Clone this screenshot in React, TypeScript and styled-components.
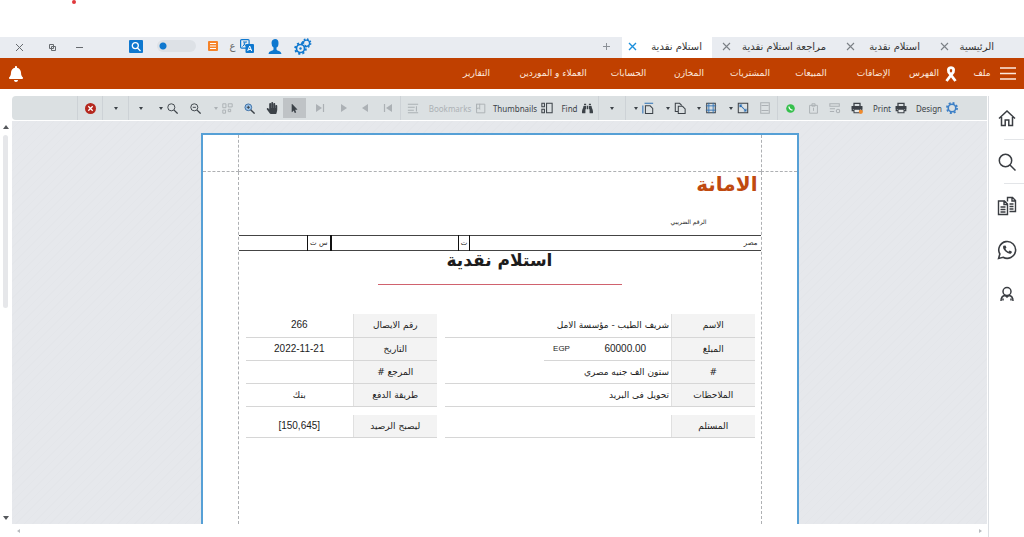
import React from "react";
import styled, { createGlobalStyle } from "styled-components";
import { FaBell, FaBinoculars, FaHandPaper, FaMousePointer } from "react-icons/fa";

const GlobalStyle = createGlobalStyle`
  *, *::before, *::after { box-sizing: border-box; }
  body { margin: 0; background: #fff; font-family: "DejaVu Sans", sans-serif; color: #222; }
  button { border: 0; background: none; padding: 0; margin: 0; color: inherit; font: inherit; cursor: pointer; }
  h1, h2, p { margin: 0; }
  svg { display: block; flex: none; }
`;

const Page = styled.div`
  display: flex;
  flex-direction: column;
  height: 100vh;
  overflow: hidden;
`;

const TopStrip = styled.div`
  flex: none;
  height: 37px;
  padding-left: 72px;
`;

const RecordDot = styled.div`
  width: 4px;
  height: 4px;
  border-radius: 2px;
  background: #e0383c;
`;

const TitleBar = styled.header`
  flex: none;
  display: flex;
  height: 21px;
  background: #e9ecf1;
`;

const TabList = styled.nav`
  display: flex;
  padding-right: 20px;
`;

const Tab = styled.div<{ $w: number; $active?: boolean }>`
  display: flex;
  align-items: center;
  justify-content: space-between;
  width: ${(p) => p.$w}px;
  height: 21px;
  padding: 0 10px 2px ${(p) => (p.$active ? 6 : 10)}px;
  background: ${(p) => (p.$active ? "#fff" : "transparent")};
`;

const CloseTab = styled.button<{ $active?: boolean }>`
  color: ${(p) => (p.$active ? "#1c8fdc" : "#7b8086")};
`;

const TabLabel = styled.button`
  color: #333;
  font-size: 10px;
  line-height: 18px;
  white-space: nowrap;
`;

const AddTab = styled.button`
  width: 32px;
  height: 18px;
  color: #8b9097;
  display: grid;
  place-items: center;
`;

const WindowTools = styled.div`
  display: flex;
  align-items: center;
  width: 123px;
  height: 21px;
  color: #666a6f;
`;

const QuickTools = styled.div`
  display: flex;
  align-items: center;
  height: 18px;
  color: #0f78cf;
`;

const Tool = styled.button<{ $w: number }>`
  display: grid;
  place-items: center;
  width: ${(p) => p.$w}px;
  height: 18px;
`;

const LetterMark = styled.span`
  width: 9px;
  color: #666;
  font-size: 10px;
  line-height: 18px;
  text-align: center;
`;

const Spacer = styled.div`
  flex: 1;
`;

const Switch = styled.input`
  appearance: none;
  width: 39px;
  height: 12px;
  margin: 0 2px 0 8px;
  border-radius: 6px;
  background: radial-gradient(circle at 6px 6px, #0f78cf 3px, #dde1e6 4px);
`;

const MenuBar = styled.nav`
  flex: none;
  display: flex;
  align-items: center;
  height: 31px;
  padding: 0 8px;
  background: #c04000;
  color: #fde9de;
`;

const MenuItem = styled.button<{ $w: number }>`
  width: ${(p) => p.$w}px;
  height: 31px;
  font-size: 9px;
  line-height: 31px;
  white-space: nowrap;
  display: flex;
  align-items: center;
  justify-content: center;
  gap: 6px;
`;

const Body = styled.div`
  flex: 1;
  display: flex;
  min-height: 0;
  padding-top: 7px;
`;

const VScroll = styled.div`
  width: 12px;
  display: flex;
  flex-direction: column;
  align-items: center;
  padding: 28px 1px 4px 0;
  color: #55585c;
`;

const VTrack = styled.div`
  flex: 1;
  width: 5px;
  margin: 5px 0;
`;

const VThumb = styled.div`
  height: 46%;
  border-radius: 3px;
  background: #e6e7ea;
`;

const ScrollEnd = styled.div`
  height: 18px;
`;

const Viewer = styled.main`
  flex: 1;
  min-width: 0;
  display: flex;
  flex-direction: column;
`;

const Toolbar = styled.div`
  flex: none;
  display: flex;
  justify-content: flex-end;
  height: 24px;
  padding-right: 25px;
  border-radius: 4px 0 0 4px;
  background: #dbe0e2;
  color: #3c4248;
  font-family: "Noto Sans", sans-serif;
  font-size: 8px;
`;

const Divider = styled.div`
  width: 1px;
  background: #cdd2d6;
`;

const BarButton = styled.button<{ $w: number; $active?: boolean; $dim?: boolean }>`
  display: flex;
  align-items: center;
  justify-content: center;
  gap: 4px;
  width: ${(p) => p.$w}px;
  height: ${(p) => (p.$active ? 20 : 24)}px;
  margin-top: ${(p) => (p.$active ? 2 : 0)}px;
  white-space: nowrap;
  color: ${(p) => (p.$dim ? "#acb1b5" : "inherit")};
  background: ${(p) => (p.$active ? "#bfc3c6" : "none")};
`;

const Caret = styled.span`
  border: 2px solid transparent;
  border-top: 3px solid currentColor;
  border-bottom: 0;
`;

const Canvas = styled.div`
  flex: 1;
  min-height: 0;
  margin-top: 1px;
  padding-top: 12px;
  overflow: hidden;
  display: flex;
  justify-content: center;
  background: repeating-linear-gradient(135deg, #e6e8ec 0 5px, #e4e6ea 5px 6px);
`;

const Paper = styled.article`
  width: 598px;
  display: grid;
  grid-template-columns: 36px 1fr 36px;
  grid-template-rows: 37px 1fr;
  border: 2px solid #56a0d6;
  border-bottom: 0;
  background: #fff;
`;

const Margin = styled.div<{ $top?: boolean; $side?: "left" | "right" }>`
  border: 0 dashed #aeb0b3;
  border-bottom-width: ${(p) => (p.$top ? 1 : 0)}px;
  border-right-width: ${(p) => (p.$side === "left" ? 1 : 0)}px;
  border-left-width: ${(p) => (p.$side === "right" ? 1 : 0)}px;
`;

const Report = styled.section`
  min-height: 0;
  display: flex;
  flex-direction: column;
  color: #1c1c1c;
`;

const Company = styled.h1`
  height: 42px;
  padding: 0 3px;
  color: #c04a10;
  font-size: 20px;
  line-height: 24px;
`;

const TaxNumber = styled.p`
  height: 21px;
  padding-right: 54px;
  font-size: 6px;
  line-height: 16px;
`;

const InfoTable = styled.table`
  width: 100%;
  table-layout: fixed;
  border-collapse: collapse;
  border: solid #444;
  border-width: 1px 0;
  font-size: 7px;
  line-height: 13px;
`;

const InfoCell = styled.td<{ $w?: number; $edge?: number; $center?: boolean }>`
  width: ${(p) => (p.$w ? `${p.$w}px` : "auto")};
  height: 15px;
  padding: 0 ${(p) => (p.$center ? 0 : 3)}px;
  border-right: ${(p) => p.$edge ?? 0}px solid #111;
  text-align: ${(p) => (p.$center ? "center" : "right")};
  white-space: nowrap;
`;

const ReportTitle = styled.h2`
  width: 244px;
  height: 34px;
  margin: 0 auto 29px;
  border-bottom: 1px solid #d0626e;
  font-size: 17px;
  line-height: 18px;
  text-align: center;
  white-space: nowrap;
`;

const Columns = styled.div`
  display: flex;
  justify-content: space-between;
  padding: 0 6px 0 7px;
`;

const Fields = styled.table<{ $w: number }>`
  width: ${(p) => p.$w}px;
  margin-bottom: 8px;
  table-layout: fixed;
  border-collapse: collapse;
  font-size: 9px;
  line-height: 14px;
`;

const Col = styled.col<{ $w?: number }>`
  width: ${(p) => (p.$w ? `${p.$w}px` : "auto")};
`;

const FieldName = styled.th`
  width: 83px;
  height: 23px;
  padding: 0;
  background: #f3f3f3;
  border-bottom: 1px solid #d6d6d6;
  border-left: 1px solid #e0e0e0;
  font-weight: normal;
  text-align: center;
`;

const FieldValue = styled.td<{ $align?: "center" | "right"; $latin?: number; $plain?: boolean }>`
  height: 23px;
  padding: 0 2px;
  border-bottom: ${(p) => (p.$plain ? 0 : 1)}px solid #d6d6d6;
  text-align: ${(p) => p.$align ?? "right"};
  white-space: nowrap;
  ${(p) => p.$latin && `font-family: "Liberation Sans", sans-serif; font-size: ${p.$latin}px;`}
`;

const HScroll = styled.div`
  flex: none;
  display: flex;
  align-items: center;
  justify-content: space-between;
  height: 13px;
  padding: 0 4px;
  color: #b8bbbf;
`;

const SideBar = styled.aside`
  width: 36px;
  display: flex;
  flex-direction: column;
  align-items: flex-end;
  border-left: 1px solid #dcdfe3;
  margin-left: 1px;
  color: #3a3d42;
`;

const SideButton = styled.button<{ $line?: boolean }>`
  display: grid;
  place-items: center;
  width: 34px;
  height: 44px;
  background: ${(p) => (p.$line ? "linear-gradient(#e3e5e8, #e3e5e8) right bottom / 20px 1px no-repeat" : "none")};
`;

const ArrowMark = ({ d }: { d: string }) => (
  <svg width="6" height="6" viewBox="0 0 6 6" fill="currentColor"><path d={d} /></svg>
);

const Line = ({ size = 14, children, w = 1.2, vb = 14 }: { size?: number; children: React.ReactNode; w?: number; vb?: number }) => (
  <svg width={size} height={size} viewBox={`0 0 ${vb} ${vb}`} fill="none" stroke="currentColor" strokeWidth={w}>
    {children}
  </svg>
);

const Cross = ({ w = 1 }: { w?: number }) => (
  <Line size={9} vb={9} w={w}><path d="M1 1l7 7M8 1l-7 7" /></Line>
);

const Cog = ({ x = 7, y = 7, r = 4 }: { x?: number; y?: number; r?: number }) => (
  <>
    <circle cx={x} cy={y} r={r} strokeWidth={r * 0.42} />
    <circle cx={x} cy={y} r={r * 1.35} strokeWidth={r * 0.45} strokeDasharray={`${r * 0.53} ${r * 0.53}`} />
  </>
);

const Printer = ({ badge }: { badge?: boolean }) => (
  <Line size={12}>
    <path d="M3.5 5V1.5h7V5M3.5 10h-2V5.5h11V10h-2" strokeWidth="1.5" />
    <path d="M1.5 5.5h11v2h-11z" fill="currentColor" />
    <path d="M3.5 8.5h7v4h-7z" fill="#e6e9ea" />
    {badge && <circle cx="11.5" cy="11.5" r="2.4" fill="#f08a2c" stroke="none" />}
  </Line>
);

const tabs = [
  { label: "الرئيسية", w: 74 },
  { label: "استلام نقدية", w: 94 },
  { label: "مراجعة استلام نقدية", w: 124 },
  { label: "استلام نقدية", w: 90, active: true },
];

const menus = [
  { label: "الإضافات", w: 57 },
  { label: "المبيعات", w: 68 },
  { label: "المشتريات", w: 54 },
  { label: "المخازن", w: 68 },
  { label: "الحسابات", w: 53 },
  { label: "العملاء و الموردين", w: 98 },
  { label: "التقارير", w: 55 },
];

const receipt = [
  ["رقم الايصال", "266"],
  ["التاريخ", "2022-11-21"],
  ["المرجع #", ""],
  ["طريقة الدفع", "بنك"],
];

export default function App() {
  return (
    <Page>
      <GlobalStyle />
      <TopStrip><RecordDot /></TopStrip>

      <TitleBar dir="rtl">
        <TabList>
          {tabs.map((t, i) => (
            <Tab key={i} $w={t.w} $active={t.active}>
              <TabLabel>{t.label}</TabLabel>
              <CloseTab $active={t.active} aria-label="إغلاق"><Cross w={t.active ? 1.4 : 1.1} /></CloseTab>
            </Tab>
          ))}
        </TabList>
        <AddTab aria-label="تبويب جديد"><Line size={7} vb={7} w={1}><path d="M3.5 0v7M0 3.5h7" /></Line></AddTab>
        <Spacer />
        <QuickTools dir="ltr">
          <Tool $w={26} aria-label="بحث">
            <svg width="14" height="13" viewBox="0 0 14 13">
              <rect width="14" height="13" rx="1" fill="#0f78cf" />
              <g fill="none" stroke="#fff" strokeWidth="1.3"><circle cx="6.3" cy="5.6" r="3" /><path d="M8.5 8l3 3" /></g>
            </svg>
          </Tool>
          <Switch type="checkbox" role="switch" aria-label="الوضع" />
          <Tool $w={30} aria-label="ملاحظات">
            <svg width="10" height="10" viewBox="0 0 10 10"><rect width="10" height="10" rx="1" fill="#f5832a" /><path d="M2 2.500h6M2 5h6M2 7.500h6" stroke="#fff" /></svg>
          </Tool>
          <LetterMark>ع</LetterMark>
          <Tool $w={19} aria-label="اللغة">
            <svg width="14" height="14" viewBox="0 0 14 14">
              <rect x=".6" y=".6" width="8.500" height="8.500" rx="1" fill="#e9ecf1" stroke="#0f78cf" strokeWidth="1.200" />
              <path d="M3 3h4M5 3q0 3-2.500 4.500M3.500 5l3 2" stroke="#0f78cf" fill="none" />
              <rect x="5.500" y="5" width="8.500" height="9" rx="1" fill="#0f78cf" />
              <path d="M7.700 12l2-5 2 5M8.400 10.500h2.700" stroke="#fff" fill="none" />
            </svg>
          </Tool>
          <Tool $w={38} aria-label="المستخدم">
            <svg width="14" height="15" viewBox="0 0 14 15" fill="#0f78cf">
              <path d="M7 0Q10.500 0 10.500 4T8.500 8.500V10.500Q9 11.500 11 12T13.500 15H.5Q.5 12.700 3 12T5.500 10.500V8.500Q3.500 7.500 3.500 4T7 0z" />
            </svg>
          </Tool>
          <Tool $w={18} aria-label="الإعدادات">
            <svg width="18" height="17" viewBox="0 0 18 17" fill="none" stroke="#0f78cf">
              <Cog x={12.5} y={5.2} r={3.1} />
              <circle cx="6.500" cy="10.500" r="5.800" fill="#e9ecf1" stroke="none" />
              <Cog x={6.5} y={10.5} r={4} />
              <circle cx="6.500" cy="10.500" r="1.200" fill="#0f78cf" stroke="none" />
            </svg>
          </Tool>
        </QuickTools>
        <WindowTools dir="ltr">
          <Tool $w={38} aria-label="إغلاق النافذة"><Cross /></Tool>
          <Tool $w={28} aria-label="استعادة">
            <Line size={7} vb={7} w={1}><path d="M.5.5h4v4h-4zM2.500 2.500h4v4h-4z" /></Line>
          </Tool>
          <Tool $w={26} aria-label="تصغير"><Line size={7} vb={7} w={1}><path d="M0 3.500h7" /></Line></Tool>
        </WindowTools>
      </TitleBar>

      <MenuBar dir="rtl">
        <button aria-label="القائمة"><Line size={16} vb={16} w={1.4}><path d="M0 2h16M0 7.500h16M0 13h16" /></Line></button>
        <MenuItem $w={36}>ملف</MenuItem>
        <MenuItem $w={62}>
          <svg width="12" height="16" viewBox="0 0 12 16" fill="none" stroke="#fff">
            <path d="M1.500 15L8.300 6Q9.500 1.700 6 1.700T3.700 6l6.800 9" strokeWidth="2.800" />
          </svg>
          الفهرس
        </MenuItem>
        {menus.map((m) => <MenuItem key={m.label} $w={m.w}>{m.label}</MenuItem>)}
        <Spacer />
        <button aria-label="التنبيهات"><FaBell size={16} color="#fff" /></button>
      </MenuBar>

      <Body>
        <VScroll>
          <ArrowMark d="M0 5h6L3 1z" />
          <VTrack><VThumb /></VTrack>
          <ScrollEnd><ArrowMark d="M0 1h6L3 5z" /></ScrollEnd>
        </VScroll>
        <Viewer>
          <Toolbar role="toolbar">
            <Divider />
            <BarButton $w={24} aria-label="Close">
              <svg width="11" height="11" viewBox="0 0 11 11"><circle cx="5.500" cy="5.500" r="5.500" fill="#b5281e" /><path d="M3.300 3.300l4.400 4.400M7.700 3.300L3.300 7.700" stroke="#fff" strokeWidth="1.300" /></svg>
            </BarButton>
            <Divider />
            <BarButton $w={25} aria-label="Send"><Caret /></BarButton>
            <Divider />
            <BarButton $w={24} aria-label="Export"><Caret /></BarButton>
            <BarButton $w={30} aria-label="Zoom"><Caret /><Line size={11}><circle cx="5.500" cy="5.500" r="4.500" /><path d="M9 9l4.500 4.500" strokeWidth="1.600" /></Line></BarButton>
            <BarButton $w={24} aria-label="Zoom out"><Line size={11}><circle cx="5.500" cy="5.500" r="4.500" /><path d="M3.500 5.500h4" /><path d="M9 9l4.500 4.500" strokeWidth="1.600" /></Line></BarButton>
            <BarButton $w={32} $dim aria-label="Many pages"><Caret /><Line size={11}><path d="M1 1h4v5H1zM8 1h5v4H8zM1 9h3.500v4H1zM8 8h3v3H8z" /></Line></BarButton>
            <BarButton $w={21} aria-label="Zoom in"><Line size={11}><circle cx="5.500" cy="5.500" r="4.300" fill="#9cc4ea" stroke="#3b6ea5" /><path d="M3.500 5.500h4M5.500 3.500v4" /><path d="M8.500 8.500l5 5" strokeWidth="1.800" /></Line></BarButton>
            <BarButton $w={23} aria-label="Hand tool"><FaHandPaper size={12} /></BarButton>
            <BarButton $w={23} $active aria-label="Pointer"><FaMousePointer size={9} /></BarButton>
            <BarButton $w={28} $dim aria-label="Last page"><Line size={10} vb={10}><path d="M1 1v8l6-4z" fill="currentColor" stroke="none" /><path d="M8.500 1v8" /></Line></BarButton>
            <BarButton $w={20} $dim aria-label="Next page"><Line size={8} vb={8}><path d="M1 0v8l6-4z" fill="currentColor" stroke="none" /></Line></BarButton>
            <BarButton $w={22} $dim aria-label="Previous page"><Line size={8} vb={8}><path d="M7 0v8L1 4z" fill="currentColor" stroke="none" /></Line></BarButton>
            <BarButton $w={24} $dim aria-label="First page"><Line size={10} vb={10}><path d="M9 1v8L3 5z" fill="currentColor" stroke="none" /><path d="M1.500 1v8" /></Line></BarButton>
            <Divider />
            <BarButton $w={24} $dim aria-label="Parameters"><Line size={12}><path d="M1 2.500h12M1 6h8M1 9.500h7M1 12.500h12M11 5v6" /></Line></BarButton>
            <BarButton $w={65} $dim>Bookmarks<Line size={11}><path d="M2 1.500h10.500v11H2zM2 1v7l2-2 2 2V1" /></Line></BarButton>
            <BarButton $w={66}>Thumbnails<Line size={12}><path d="M1 1.500h3v4H1zM1 8.500h3v4H1zM6.500 1.500h6.500v11H6.500z" /></Line></BarButton>
            <BarButton $w={42}>Find<FaBinoculars size={11} /></BarButton>
            <Divider />
            <BarButton $w={26} aria-label="Watermark"><Caret /></BarButton>
            <Divider />
            <BarButton $w={36} aria-label="Page size"><Caret /><Line size={12}><path d="M4 4.500h5.500l3 3v6H4z" /><path d="M3 1.500h10M1 4v9.500" stroke="#2b6fb5" /></Line></BarButton>
            <BarButton $w={27} aria-label="Page orientation"><Caret /><Line size={12}><path d="M5 11H1.500V1.500h5L9 4M5 5h5l3 3v5.500H5z" /></Line></BarButton>
            <BarButton $w={36} aria-label="Margins"><Caret /><Line size={12}><path d="M2 1.500h10v11H2z" /><path d="M4.500 1v12M9.500 1v12M1 4.500h12M1 9.500h12" stroke="#2b6fb5" strokeWidth="1" /></Line></BarButton>
            <BarButton $w={28} aria-label="Scale"><Caret /><Line size={12}><path d="M1.500 1.500h11v11h-11z" /><path d="M3.500 6V3.500H6M10.500 8v2.500H8M3.500 3.500l7 7" stroke="#2b6fb5" /></Line></BarButton>
            <BarButton $w={24} $dim aria-label="Header and footer"><Line size={12}><path d="M2 1h10v12H2zM3 4h8M3 10h8" /></Line></BarButton>
            <Divider />
            <BarButton $w={25} aria-label="WhatsApp">
              <svg width="9" height="9" viewBox="0 0 9 9"><circle cx="4.500" cy="4.500" r="4.300" fill="#35c04c" /><path d="M3 2.500q0 3 3.500 3.700" stroke="#fff" strokeWidth="1.300" fill="none" /></svg>
            </BarButton>
            <BarButton $w={21} $dim aria-label="Open"><Line size={11}><path d="M2 3h10v10H2zM5 1h4v3H5zM7 6v4" /></Line></BarButton>
            <BarButton $w={22} $dim aria-label="Edit fields"><Line size={12}><path d="M1 2h11v3H1zM1 8h6M1 11h5" /><circle cx="10.500" cy="10.500" r="2" /></Line></BarButton>
            <BarButton $w={22} aria-label="Quick print"><Printer badge /></BarButton>
            <BarButton $w={44}>Print<Printer /></BarButton>
            <BarButton $w={50}>Design<svg width="12" height="12" viewBox="0 0 14 14" fill="none" stroke="#3c7fc6"><Cog r={4.4} /></svg></BarButton>
          </Toolbar>
          <Canvas>
            <Paper>
              <Margin $top $side="left" /><Margin $top /><Margin $top $side="right" />
              <Margin $side="left" />
              <Report dir="rtl">
                <Company>الامانة</Company>
                <TaxNumber>الرقم الضريبي</TaxNumber>
                <InfoTable>
                  <tbody>
                    <tr>
                      <InfoCell>مصر</InfoCell>
                      <InfoCell $w={11} $edge={1} $center>ت</InfoCell>
                      <InfoCell $w={128} $edge={1} />
                      <InfoCell $w={23} $edge={2} $center>س ت</InfoCell>
                      <InfoCell $w={69} $edge={1} />
                    </tr>
                  </tbody>
                </InfoTable>
                <ReportTitle>استلام نقدية</ReportTitle>
                <Columns>
                  <div>
                    <Fields $w={310}>
                      <colgroup><Col $w={83} /><Col $w={92} /><Col $w={36} /><Col /></colgroup>
                      <tbody>
                        <tr><FieldName scope="row">الاسم</FieldName><FieldValue colSpan={3}>شريف الطيب - مؤسسة الامل</FieldValue></tr>
                        <tr>
                          <FieldName scope="row">المبلغ</FieldName>
                          <FieldValue $align="center" $latin={10}>60000.00</FieldValue>
                          <FieldValue $align="center" $latin={8}>EGP</FieldValue>
                          <FieldValue $plain />
                        </tr>
                        <tr><FieldName scope="row">#</FieldName><FieldValue colSpan={3}>ستون الف جنيه مصري</FieldValue></tr>
                        <tr><FieldName scope="row">الملاحظات</FieldName><FieldValue colSpan={3}>تحويل فى البريد</FieldValue></tr>
                      </tbody>
                    </Fields>
                    <Fields $w={310}>
                      <tbody><tr><FieldName scope="row">المستلم</FieldName><FieldValue /></tr></tbody>
                    </Fields>
                  </div>
                  <div>
                    <Fields $w={191}>
                      <tbody>
                        {receipt.map(([name, value]) => (
                          <tr key={name}><FieldName scope="row">{name}</FieldName><FieldValue $align="center" $latin={/\d/.test(value) ? 10 : undefined}>{value}</FieldValue></tr>
                        ))}
                      </tbody>
                    </Fields>
                    <Fields $w={191}>
                      <tbody><tr><FieldName scope="row">ليصبح الرصيد</FieldName><FieldValue $align="center" $latin={10} dir="ltr">[150,645]</FieldValue></tr></tbody>
                    </Fields>
                  </div>
                </Columns>
              </Report>
              <Margin $side="right" />
            </Paper>
          </Canvas>
          <HScroll><ArrowMark d="M4 1v4L1 3z" /><ArrowMark d="M2 1v4l3-2z" /></HScroll>
        </Viewer>
        <SideBar>
          <SideButton $line aria-label="الرئيسية"><Line size={18} vb={18} w={1.5}><path d="M1 9.500L9 2l8 7.500M3.500 8v8.500h3.700V11h3.600v5.500h3.700V8" /></Line></SideButton>
          <SideButton $line aria-label="بحث"><Line size={18} vb={18} w={1.5}><circle cx="7.500" cy="7.500" r="6.200" /><path d="M12 12l5.500 5.500" /></Line></SideButton>
          <SideButton aria-label="مستندات"><Line size={20} vb={20} w={1.4}><path d="M10.500 5.500V1.500h5l3 3v11h-6M15 1.500V5h3.500M1.500 5h6l3 3v10.500h-9zM7 5v3.500h3.500M3.500 11h5M3.500 13.500h5M3.500 16h5M12.500 8h4M12.500 10.500h4M12.500 13h4" /></Line></SideButton>
          <SideButton aria-label="واتساب"><Line size={20} vb={19} w={1.5}><path d="M1.500 17.500l1.200-4.200A8 8 0 1 1 5.800 16.400z" /><path d="M6 5.500Q5 8 7.800 10.800T13 13q1.500-.6 1-2l-2-1-1.200 1.200Q8.800 10.200 8 8.200l1-1L8 5.200z" fill="currentColor" stroke="none" /></Line></SideButton>
          <SideButton aria-label="المستخدم"><Line size={16} vb={16} w={1.5}><circle cx="8" cy="5.500" r="4" /><path d="M2 15q0-5 4-5.500L8 11l2-1.500q4 .5 4 5.500M4 14.500v-2M12 14.500v-2" /></Line></SideButton>
        </SideBar>
      </Body>
    </Page>
  );
}
